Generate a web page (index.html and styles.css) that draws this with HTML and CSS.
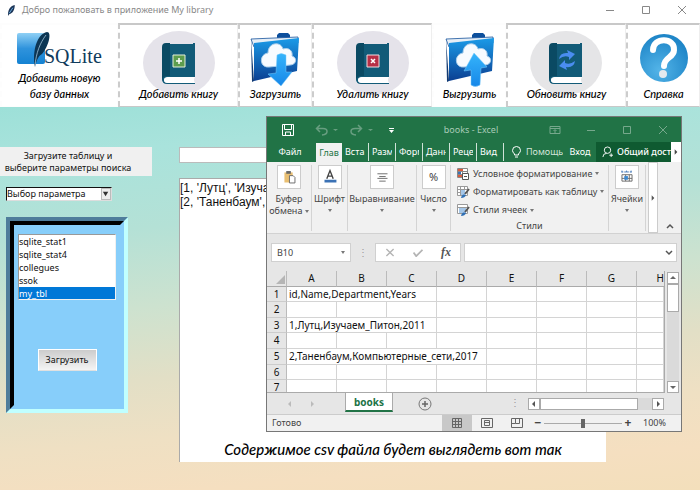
FILE: index.html
```html
<!DOCTYPE html>
<html lang="ru">
<head>
<meta charset="utf-8">
<title>My library</title>
<link rel="stylesheet" href="styles.css">
</head>
<body>
<svg class="defs" aria-hidden="true">
  <defs>
    <linearGradient id="blue" x1="0" y1="0" x2="0" y2="1"><stop offset="0" stop-color="#1b9be8"/><stop offset="1" stop-color="#0b3f92"/></linearGradient>
    <linearGradient id="sky" x1="0" y1="0" x2="0" y2="1"><stop offset="0" stop-color="#8fd0f5"/><stop offset=".5" stop-color="#2f93dc"/><stop offset="1" stop-color="#1482d2"/></linearGradient>
    <linearGradient id="arrow" x1="0" y1="0" x2="0" y2="1"><stop offset="0" stop-color="#35b4fb"/><stop offset="1" stop-color="#1787e8"/></linearGradient>
    <radialGradient id="ball" cx=".4" cy=".75" r=".7"><stop offset="0" stop-color="#53b4e8"/><stop offset="1" stop-color="#1f86c8"/></radialGradient>
    <symbol id="book" viewBox="0 0 74 68">
      <path d="M25 14h28v33H25z" fill="#125b78"/>
      <path d="M20 17q0-4 4-4h4v34q-6 0-8 4z" fill="#0a4a63"/>
      <path d="M20 17v32q0 5 5 5h28v-1H26q-4 0-4-3t4-3h27V13h-2v33H25q-3 0-5 3z" fill="#125b78"/>
      <path d="M53 47H26q-4 0-4 3t4 3h27q-2-3 0-6z" fill="#fff"/>
    </symbol>
    <symbol id="folder" viewBox="0 0 50 54">
      <path d="M27 6V2l2-2h9l2 2v4z" fill="#0d4f9c"/>
      <path d="M1 6l47-2v6L4 14z" fill="#e6eef6" stroke="#16539c" stroke-width=".8"/>
      <path d="M1 6l3 42-2 1z" fill="#123a72"/>
      <path d="M4 10L49 5l-2 33L4 48z" fill="url(#blue)"/>
      <path d="M19 34C9 35 9 21 18 20 18 9 31 8 33 16c6-2 10 2 9 7 6 2 4 9-2 9z" fill="#f7fbff" stroke="#a9cdea"/>
    </symbol>
  </defs>
</svg>

<header class="titlebar">
  <svg class="feather" viewBox="0 0 9 14"><path d="M1 13C0 7 3 2 8 1c0 5-2 9-6 10z" fill="#1c3557"/><path d="M2 10L6 4" stroke="#6eb4e8"/></svg>
  <h1>Добро пожаловать в приложение My library</h1>
  <div class="winbtns">
    <button aria-label="Свернуть"><svg viewBox="0 0 10 10"><path d="M1 5.500h8"/></svg></button>
    <button aria-label="Развернуть"><svg viewBox="0 0 10 10"><path d="M1.500 1.500h7v7h-7z"/></svg></button>
    <button aria-label="Закрыть"><svg viewBox="0 0 10 10"><path d="M1 1l8 8M9 1L1 9"/></svg></button>
  </div>
</header>

<nav class="tools">
  <button class="tool plain">
    <svg class="logo" viewBox="0 0 88 40">
      <rect x="1" y="2" width="28" height="31" rx="2" fill="url(#sky)"/>
      <path d="M19 36C16 20 21 3 31 1c5 0 2 14-5 22-3 2-5 4-7 13z" fill="#0c3553"/>
      <path d="M19 35c1-13 5-23 11-31" stroke="#b8d9ee" fill="none" stroke-width=".7"/>
      <text x="28" y="32">SQLite</text>
    </svg>
    <span>Добавить новую<br>базу данных</span>
  </button>
  <button class="tool">
    <svg class="pic" viewBox="0 0 74 68"><ellipse cx="37" cy="33" rx="36" ry="32" fill="#e5e3ea"/><use href="#book"/><path d="M31 25h12v12H31z" fill="#5d9d4e" stroke="#e6f0d8"/><path d="M37 28v6M34 31h6" stroke="#fff" stroke-width="1.500"/></svg>
    <span>Добавить книгу</span>
  </button>
  <button class="tool">
    <svg class="fold" viewBox="0 0 50 54"><use href="#folder"/><path d="M27 22q4-3 9 0v17h6L31 53 18 41l8-1z" fill="url(#arrow)" stroke="#7bcaf8" stroke-width=".5"/></svg>
    <span>Загрузить</span>
  </button>
  <button class="tool">
    <svg class="pic" viewBox="0 0 74 68"><ellipse cx="37" cy="33" rx="36" ry="32" fill="#e5e3ea"/><use href="#book"/><path d="M31 25h12v12H31z" fill="#b62f46" stroke="#f2dde0"/><path d="M35 29l4 4M39 29l-4 4" stroke="#fff" stroke-width="1.500"/></svg>
    <span>Удалить книгу</span>
  </button>
  <button class="tool plain">
    <svg class="fold" viewBox="0 0 50 54"><use href="#folder"/><path d="M29 20l13 14-6 1-1 17q-5 3-9 0V37l-7 1z" fill="url(#arrow)" stroke="#7bcaf8" stroke-width=".5"/></svg>
    <span>Выгрузить</span>
  </button>
  <button class="tool">
    <svg class="pic" viewBox="0 0 74 68"><ellipse cx="37" cy="33" rx="36" ry="32" fill="#e5e5e7"/><use href="#book"/><path d="M30 29q1-7 9-6l-1-3 8 4-6 6v-3q-5-2-10 2zM46 31q-1 7-9 6l1 3-8-4 6-6v3q5 2 10-2z" fill="#4a8df0"/></svg>
    <span>Обновить книгу</span>
  </button>
  <button class="tool">
    <svg class="help" viewBox="0 0 50 50"><circle cx="25" cy="25" r="24" fill="url(#ball)"/><path d="M14 17C14 4 36 4 35 17c0 8-10 7-10 16" fill="none" stroke="#fff" stroke-width="6" stroke-linecap="round"/><circle cx="24" cy="41" r="4" fill="#e4e9ee"/></svg>
    <span>Справка</span>
  </button>
</nav>

<main class="work">
  <aside class="side">
    <label class="hint" for="param">Загрузите таблицу и<br>выберите параметры поиска</label>
    <div class="combo">
      <select id="param"><option>Выбор параметра</option></select>
      <svg viewBox="0 0 9 11"><path d="M1 3h6L4 8z"/></svg>
    </div>
    <div class="frame"><div class="panel">
      <select class="tables" size="5" aria-label="Таблицы">
        <option>sqlite_stat1</option><option>sqlite_stat4</option><option>collegues</option><option>ssok</option><option selected>my_tbl</option>
      </select>
      <button class="load">Загрузить</button>
    </div></div>
  </aside>
  <section class="content">
    <input class="query" type="text" aria-label="Поиск">
    <div class="output">
      <p>[1, 'Лутц', 'Изуча<br>[2, 'Таненбаум',</p>
      <p class="caption">Содержимое csv файла будет выглядеть вот так</p>
    </div>
  </section>

  <section class="excel" aria-label="books - Excel">
    <header class="xl-title">
      <div class="qat">
        <button aria-label="Сохранить"><svg viewBox="0 0 12 12"><path d="M.5.500h11v11H.500z" fill="none" stroke="#fff"/><path d="M2.500 1v4.500h7V1M3.500 11.500V8h5v3.500" fill="none" stroke="#fff"/></svg></button>
        <button class="dim" aria-label="Отменить"><svg class="wide" viewBox="0 0 24 12"><path d="M5 1L1.500 4.500 5 8M2 4.500h6q4 0 4 3t-5 3.500" fill="none" stroke="#689e80" stroke-width="1.500"/><path d="M18 5h5l-2.500 2z" fill="#689e80"/></svg></button>
        <button class="dim" aria-label="Повторить"><svg class="wide" viewBox="0 0 24 12"><path d="M8 1l3.500 3.500L8 8M11 4.500H5q-4 0-4 3t5 3.500" fill="none" stroke="#689e80" stroke-width="1.500"/><path d="M18 5h5l-2.500 2z" fill="#689e80"/></svg></button>
        <button aria-label="Настройка панели"><svg viewBox="0 0 12 12"><path d="M4 4h5v1H4zM4 6h5L6.500 9z" fill="#fff"/></svg></button>
      </div>
      <span>books - Excel</span>
      <div class="xl-win">
        <button aria-label="Параметры ленты"><svg viewBox="0 0 12 10"><path d="M1 1.500h10v7H1zM1 3.500h10M6 8V5M4.500 6L6 4.500 7.500 6"/></svg></button>
        <button aria-label="Свернуть"><svg viewBox="0 0 12 10"><path d="M2 5.500h8"/></svg></button>
        <button aria-label="Развернуть"><svg viewBox="0 0 12 10"><path d="M2.500 1.500h7v7h-7z"/></svg></button>
        <button aria-label="Закрыть"><svg viewBox="0 0 12 10"><path d="M2 1l8 8M10 1L2 9"/></svg></button>
      </div>
    </header>
    <nav class="tabs">
      <button class="file">Файл</button>
      <button class="on">Глав</button>
      <button class="cut">Вста</button>
      <button class="cut">Разм</button>
      <button class="cut">Форм</button>
      <button class="cut">Данн</button>
      <button class="cut">Реце</button>
      <button class="cut">Вид</button>
      <button class="assist"><svg viewBox="0 0 10 12"><path d="M3 8Q1 6 1 4.500a4 4 0 0 1 8 0Q9 6 7 8v1H3zM3.500 11h3" fill="none" stroke="#fff"/></svg><i>Помощь</i></button>
      <button class="login">Вход</button>
      <button class="share"><svg viewBox="0 0 12 12"><circle cx="6" cy="4" r="3.500"/><path d="M1 11.500q0-4 4-4M8 9.500h4M10 7.500v4"/></svg><i>Общий дост</i></button>
      <button class="more" aria-label="Далее"><svg viewBox="0 0 6 6"><path d="M2 1v4l2-2z"/></svg></button>
    </nav>
    <div class="ribbon">
      <button class="grp clip"><svg class="box" viewBox="0 0 24 24"><path d="M7 7h9v11H7z" fill="#e9bf72"/><path d="M9 5.500h5v3H9z" fill="#666"/><path d="M12.500 10.500h4l2 2v6h-6z" fill="#fff" stroke="#666"/></svg><span>Буфер<br>обмена <b></b></span></button>
      <button class="grp font"><svg class="box" viewBox="0 0 24 24"><path d="M8.500 14L12 5l3.500 9M9.500 11h5" fill="none" stroke="#444" stroke-width="1.500"/><path d="M6 15h13v3H6z" fill="#3b72b5"/></svg>Шрифт<b></b></button>
      <button class="grp align"><svg class="box" viewBox="0 0 24 24"><path d="M7 8.500h11M9 11.500h7M7 13.500h11M9 16.500h7" stroke="#666"/></svg>Выравнивание<b></b></button>
      <button class="grp num"><span class="box">%</span>Число<b></b></button>
      <div class="styles">
        <button><svg viewBox="0 0 13 12"><path d="M.5.500h10v9H.500zM.5 3.500h10M.5 6.500h10M5.500.500v9" fill="#fff" stroke="#888"/><path d="M1 1h5v2H1zM1 7h4v2H1z" fill="#d95a3c"/><path d="M1 4h3v2H1z" fill="#3b72b5"/><path d="M5.500 5.500h6v6h-6z" fill="#fff" stroke="#555"/><path d="M7 8.500h3" stroke="#555"/></svg>Условное форматирование <b></b></button>
        <button><svg viewBox="0 0 13 12"><path d="M.5.500h10v9H.500zM.5 3.500h10M.5 6.500h10M3.500.500v9M7.500.500v9" fill="#fff" stroke="#999"/><path d="M4 4h4v5H4z" fill="#a4c6e8"/><path d="M12 3L8 8" stroke="#555" stroke-width="2"/><path d="M4 12q1-5 5-3-1 3-5 3z" fill="#2f6fb4"/></svg>Форматировать как таблицу <b></b></button>
        <button><svg viewBox="0 0 13 12"><path d="M.5.500h10v9H.500zM.5 3.500h10" fill="#fff" stroke="#999"/><path d="M2 4h7v5H2z" fill="#a4c6e8"/><path d="M12 3L8 8" stroke="#555" stroke-width="2"/><path d="M4 12q1-5 5-3-1 3-5 3z" fill="#2f6fb4"/></svg>Стили ячеек <b></b></button>
        <span>Стили</span>
      </div>
      <button class="grp cells"><svg class="box" viewBox="0 0 24 24"><path d="M6 6.500h11M6.500 5v3M11.500 5v3M16.500 5v3" stroke="#3b72b5" stroke-dasharray="2 1"/><path d="M6.500 9.500h11v7h-11zM6.500 13.500h11M10.500 9.500v7M14.500 9.500v7" fill="#fff" stroke="#666"/><path d="M9 11h4v4H9z" fill="#3b88d0"/></svg>Ячейки<b></b></button>
      <button class="scrollr" aria-label="Прокрутить"><svg viewBox="0 0 6 6"><path d="M2 1v4l2-2z"/></svg></button>
      <button class="fold-up" aria-label="Свернуть ленту"><svg viewBox="0 0 8 6"><path d="M1 5l3-3 3 3" fill="none" stroke="#555" stroke-width="1.500"/></svg></button>
    </div>
    <div class="fbar">
      <div class="namebox"><input type="text" value="B10" aria-label="Имя ячейки"><b></b></div>
      <span class="dots">⋮</span>
      <div class="fx">
        <button aria-label="Отмена"><svg viewBox="0 0 10 10"><path d="M1 1l8 8M9 1L1 9" stroke="#b4b4b4" stroke-width="1.500"/></svg></button>
        <button aria-label="Ввод"><svg viewBox="0 0 10 10"><path d="M0 5l3 4 7-7" fill="none" stroke="#b4b4b4" stroke-width="2"/></svg></button>
        <button class="fn">fx</button>
      </div>
      <div class="formula"><input type="text" aria-label="Строка формул"><svg viewBox="0 0 8 6"><path d="M1 1l3 3 3-3" fill="none" stroke="#555" stroke-width="1.500"/></svg></div>
    </div>
    <div class="sheet">
      <div class="gridwrap">
      <table>
        <colgroup><col class="rh"><col><col><col><col><col><col><col><col class="last"></colgroup>
        <thead><tr><th class="corner"><svg viewBox="0 0 9 9"><path d="M9 0v9H0z" fill="#b5b5b5"/></svg></th><th>A</th><th>B</th><th>C</th><th>D</th><th>E</th><th>F</th><th>G</th><th class="h">H</th></tr></thead>
        <tbody>
          <tr><th>1</th><td colspan="3">id,Name,Department,Years</td><td></td><td></td><td></td><td></td><td></td></tr>
          <tr class="t"><th>2</th><td></td><td></td><td></td><td></td><td></td><td></td><td></td><td></td></tr>
          <tr><th>3</th><td colspan="3">1,Лутц,Изучаем_Питон,2011</td><td></td><td></td><td></td><td></td><td></td></tr>
          <tr class="t"><th>4</th><td></td><td></td><td></td><td></td><td></td><td></td><td></td><td></td></tr>
          <tr class="t"><th>5</th><td colspan="4">2,Таненбаум,Компьютерные_сети,2017</td><td></td><td></td><td></td><td></td></tr>
          <tr><th>6</th><td></td><td></td><td></td><td></td><td></td><td></td><td></td><td></td></tr>
          <tr class="s"><th>7</th><td></td><td></td><td></td><td></td><td></td><td></td><td></td><td></td></tr>
        </tbody>
      </table>
      </div>
      <div class="vscroll"><button aria-label="Вверх"><svg viewBox="0 0 8 8"><path d="M1 5h6L4 2z"/></svg></button><i></i><button aria-label="Вниз"><svg viewBox="0 0 8 8"><path d="M1 3h6L4 6z"/></svg></button></div>
    </div>
    <div class="sheetbar">
      <button class="nav" aria-label="Назад"><svg viewBox="0 0 6 6"><path d="M4 0v6L1 3z"/></svg></button>
      <button class="nav" aria-label="Вперёд"><svg viewBox="0 0 6 6"><path d="M2 0v6l3-3z"/></svg></button>
      <button class="sheettab">books</button>
      <button class="add" aria-label="Новый лист"><svg viewBox="0 0 14 14"><circle cx="7" cy="7" r="6" fill="none" stroke="#777"/><path d="M7 4v6M4 7h6" stroke="#666" stroke-width="1.500"/></svg></button>
      <span class="dots">⋮</span>
      <div class="hscroll"><button aria-label="Влево"><svg viewBox="0 0 6 6"><path d="M4 0v6L1 3z"/></svg></button><i></i><button aria-label="Вправо"><svg viewBox="0 0 6 6"><path d="M2 0v6l3-3z"/></svg></button></div>
    </div>
    <footer class="status">
      <span>Готово</span>
      <button class="view cur" aria-label="Обычный"><svg viewBox="0 0 12 12"><path d="M1.500 1.500h9v9h-9zM1.500 4.500h9M1.500 7.500h9M4.500 1.500v9M7.500 1.500v9"/></svg></button>
      <button class="view" aria-label="Разметка страницы"><svg viewBox="0 0 12 12"><path d="M.5 1.500h11v9H.500zM3.500 3.500h5v5h-5zM4 5.500h4"/></svg></button>
      <button class="view" aria-label="Страничный"><svg viewBox="0 0 12 12"><path d="M.5 1.500h11v9H.500zM4.500 1.500v5h-4M8.500 1.500v5h-4"/></svg></button>
      <button class="zb" aria-label="Мельче">−</button>
      <input class="zoom" type="range" min="0" max="100" value="50" aria-label="Масштаб">
      <button class="zb" aria-label="Крупнее">+</button>
      <output>100%</output>
    </footer>
  </section>
</main>
</body>
</html>
```
FILE: styles.css
```css
* { box-sizing: border-box; }
body {
  margin: 0;
  min-height: 100vh;
  display: flex;
  flex-direction: column;
  font: 10px/12px "Noto Sans", "Open Sans", sans-serif;
  color: #111;
  background: #fff;
}
button, input, select { font: inherit; color: inherit; margin: 0; padding: 0; border: 0; background: none; border-radius: 0; outline: 0; }
button { display: flex; align-items: center; justify-content: center; white-space: nowrap; }
i { font-style: normal; }
.defs { position: absolute; width: 0; height: 0; }

.titlebar { display: flex; align-items: center; height: 23px; padding: 0 8px 3px 7px; gap: 6px; }
.feather { width: 9px; height: 13px; }
.titlebar h1 { margin: 0; flex: 1; font: 9px/12px "Noto Sans", sans-serif; color: #888; }
.winbtns { display: flex; gap: 16px; }
.winbtns button { width: 20px; height: 16px; }
.winbtns svg { width: 10px; height: 10px; fill: none; stroke: #888; }

.tools { display: grid; grid-template-columns: 118fr 120fr 74fr 120fr 74fr 120fr 74fr; height: 84px; }
.tool {
  display: grid;
  justify-items: center;
  padding: 4px 0 4px;
  background: #fff;
  border: 1px solid #c8c8c8;
  border-top-width: 2px;
  border-left: 2px dashed #ccc;
  border-right-color: #eee;
  font: italic 500 11px/16px Lato, "Noto Sans", sans-serif;
  color: #000;
}
.tool.plain { border-color: #fdfdfd; }
.tool > * { grid-area: 1 / 1; }
.tool svg { align-self: start; }
.tool span { align-self: end; }
.logo { width: 88px; height: 40px; margin-top: 2px; }
.logo text { font: 20px "Liberation Serif", serif; fill: #0f3b5c; }
.pic { width: 74px; height: 68px; margin-top: 1px; }
.fold { width: 50px; height: 54px; margin-top: 4px; }
.help { width: 50px; height: 50px; margin-top: 4px; }

.work {
  position: relative;
  flex: 1;
  display: grid;
  grid-template-columns: 152px 1fr;
  gap: 27px;
  padding: 40px 94px 28px 0;
  background: linear-gradient(175deg, #9de0d8 0%, #a9e3dc 12%, #b4e1d6 30%, #cde2cf 48%, #e2dfc6 64%, #efe0c3 78%, #f5dfc0 90%, #f3dfbb 100%);
}
.side { display: flex; flex-direction: column; align-items: flex-start; }
.hint { align-self: stretch; height: 29px; padding: 3px 16px 0 0; text-align: center; background: #f0f0f0; font-size: 9px; white-space: nowrap; }
.combo { display: flex; width: 106px; height: 14px; margin: 11px 0 16px 6px; background: #fff; border: 1px solid #ddd; border-top-color: #111; border-left-color: #111; }
.combo select { flex: 1; appearance: none; font-size: 9px; line-height: 12px; }
.combo svg { width: 10px; height: 12px; background: #eee; border: 1px solid #bbb; fill: #333; }
.frame { margin-left: 6px; border: 4px solid; border-color: #4f7d9b #c0ffff #c0ffff #4f7d9b; }
.panel { width: 114px; height: 188px; border: 4px solid; border-color: #000 #87cefa #87cefa #000; background: #87cefa; display: flex; flex-direction: column; align-items: center; padding-top: 9px; }
.tables { width: 98px; height: 66px; border: 1px solid #f0f0f0; border-top-color: #999; border-left-color: #999; background: #fff; overflow: hidden; font-size: 9px; scrollbar-width: none; }
.tables option { height: 13px; min-height: 13px; padding: 0; line-height: 12px; color: #111; }
.tables option:checked { background: #0078d7 linear-gradient(#0078d7, #0078d7); color: #fff; -webkit-text-fill-color: #fff; }
.load { width: 59px; height: 22px; margin-top: 49px; border: 1px solid #fff; border-bottom-color: #e0e0e0; background: linear-gradient(#ccc, #f4f4f4); font-size: 9px; }

.content { display: flex; flex-direction: column; gap: 15px; min-width: 0; }
.query { width: 100%; height: 16px; background: #fff; border: 1px solid #bbb; }
.output { flex: 1; display: flex; flex-direction: column; justify-content: space-between; background: #fff; border-left: 1px solid #aaa; border-top: 1px solid #aaa; font: 12px/14px "Liberation Sans", sans-serif; overflow: hidden; }
.output p { margin: 2px 0 0; white-space: nowrap; }
.output .caption { margin: 0 0 3px; text-align: center; font: italic 500 15px/20px Lato, "Noto Sans", sans-serif; color: #000; }

.excel { position: absolute; left: 266px; right: 18px; top: 9px; display: flex; flex-direction: column; border: 1px solid #777; background: #e6e6e6; color: #444; }
.excel b { display: inline-block; width: 0; height: 0; border: 2px solid transparent; border-top: 3px solid #777; border-bottom: 0; vertical-align: middle; }
.xl-title { display: flex; align-items: center; justify-content: space-between; height: 25px; background: #217346; color: #a8cbb7; font-size: 9px; padding: 0 8px 0 15px; }
.qat { display: flex; gap: 11px; }
.qat svg { width: 12px; height: 12px; display: block; }
.qat button:first-child { margin-right: 10px; }
.qat .wide { width: 24px; }
.xl-win { display: flex; gap: 16px; }
.xl-win button { width: 20px; height: 16px; }
.xl-win svg { width: 12px; height: 10px; fill: none; stroke: #76a88c; }
.tabs { display: flex; height: 20px; background: #217346; color: #fff; font-size: 9px; }
.tabs button { overflow: hidden; }
.tabs .file { width: 49px; padding-right: 3px; }
.tabs .on { width: 26px; background: #f1f1f1; color: #217346; margin-top: 1px; }
.tabs .cut { width: 27px; padding-left: 3px; justify-content: flex-start; position: relative; }
.tabs .cut::after { content: ""; position: absolute; right: 0; top: 1px; bottom: 1px; width: 3px; background: #217346; border-right: 1px solid #cfe2d7; }
.tabs svg { flex: none; width: 11px; height: 12px; margin-right: 4px; }
.tabs .assist { width: 60px; padding-left: 7px; justify-content: flex-start; }
.tabs .assist i { overflow: hidden; color: #d3e4d9; }
.tabs .login { flex: 1; }
.tabs .share { width: 75px; padding-left: 6px; justify-content: flex-start; background: #0f5a31; }
.share svg { fill: none; stroke: #fff; }
.share i { font-weight: 500; }
.tabs .more { width: 10px; background: #fff; }
.tabs .more svg { width: 8px; height: 8px; margin: 0; fill: #444; }

.ribbon { display: flex; height: 72px; padding-top: 3px; background: #f1f1f1; border-bottom: 1px solid #d2d2d2; font-size: 9px; line-height: 12px; }
.ribbon .grp { display: flex; flex-direction: column; justify-content: flex-start; flex: none; height: 66px; border-right: 1px solid #d4d4d4; text-align: center; }
.ribbon .box { display: block; flex: none; width: 24px; height: 24px; margin: 0 auto 4px; border: 1px solid #ccc; background: #fff; font-size: 11px; line-height: 22px; }
.ribbon .grp > b { margin: 4px auto 0; }
.ribbon .clip { width: 45px; }
.ribbon .font { width: 36px; }
.ribbon .align { width: 69px; }
.ribbon .num { width: 34px; }
.ribbon .styles { flex: 1; height: 66px; display: flex; flex-direction: column; justify-content: space-between; align-items: flex-start; padding-left: 6px; border-right: 1px solid #d4d4d4; }
.styles button { height: 17px; gap: 3px; }
.styles svg { width: 13px; height: 12px; }
.styles span { align-self: center; padding-right: 6px; line-height: 11px; }
.ribbon .cells { width: 37px; }
.scrollr { flex: none; width: 10px; margin: -3px 0 0 2px; background: #fff; border: 1px solid #ccc; }
.scrollr svg { width: 8px; height: 8px; fill: #555; flex: none; }
.fold-up { width: 23px; align-items: flex-end; padding-bottom: 4px; }
.fold-up svg { width: 8px; height: 6px; }

.fbar { display: flex; height: 37px; padding: 9px 4px; }
.namebox { display: flex; align-items: center; width: 80px; background: #fff; border: 1px solid #d0d0d0; padding: 0 5px; }
.namebox input { flex: 1; min-width: 0; font-size: 9px; }
.dots { width: 24px; text-align: center; line-height: 18px; color: #999; }
.fx { display: flex; width: 86px; background: #fff; border: 1px solid #d0d0d0; }
.fx button { flex: 1; }
.fx svg { width: 10px; height: 9px; }
.fx .fn { font: italic bold 12px "Liberation Serif", serif; color: #555; }
.formula { display: flex; flex: 1; align-items: center; margin-left: 3px; padding-right: 3px; background: #fff; border: 1px solid #d0d0d0; }
.formula input { flex: 1; min-width: 0; }
.formula svg { width: 8px; height: 6px; }

.sheet { display: flex; }
.gridwrap { flex: 1; min-width: 0; height: 122px; overflow: hidden; border-right: 1px solid #aaa; border-bottom: 1px solid #aaa; }
.sheet table { width: 100%; table-layout: fixed; border-collapse: separate; border-spacing: 0; line-height: 13px; color: #111; }
.sheet col { width: 50px; }
.sheet .rh { width: 20px; }
.sheet .last { width: auto; }
.sheet th { height: 15px; padding: 0; font-weight: normal; background: #e6e6e6; border-right: 1px solid #bbb; border-bottom: 1px solid #ccc; }
.sheet thead th { height: 16px; border-bottom: 1px solid #aaa; }
.sheet thead .h { text-align: right; border-right: 0; overflow: hidden; }
.corner svg { display: block; width: 9px; height: 9px; margin: 2px 1px 0 auto; }
.sheet td { padding: 0 0 0 2px; background: #fff; border-right: 1px solid #d4d4d4; border-bottom: 1px solid #d4d4d4; white-space: nowrap; }
.sheet .t th { height: 16px; }
.vscroll { display: flex; flex-direction: column; width: 12px; margin: 1px 2px 0; background: #dadada; }
.vscroll button, .vscroll i { height: 12px; border: 1px solid #aaa; background: #fff; }
.vscroll i { height: 28px; margin-bottom: auto; }
.vscroll svg { width: 8px; height: 8px; flex: none; fill: #666; }

.sheetbar { display: flex; height: 21px; padding-left: 12px; }
.nav { width: 22px; }
.nav svg { width: 6px; height: 6px; fill: #bbb; }
.sheettab { width: 48px; height: 19px; margin-left: 22px; background: #fff; border: 1px solid #aaa; border-top: 0; border-bottom: 2px solid #217346; font-size: 10px; font-weight: bold; color: #217346; }
.add { width: 64px; }
.add svg { width: 14px; height: 14px; }
.sheetbar .dots { margin-left: auto; }
.hscroll { display: flex; width: 136px; height: 12px; margin: 5px 17px 0 1px; background: #dadada; }
.hscroll button { width: 12px; border: 1px solid #aaa; background: #fff; }
.hscroll i { width: 98px; margin-right: auto; border: 1px solid #aaa; background: #fff; }
.hscroll svg { width: 6px; height: 6px; flex: none; fill: #555; }

.status { display: flex; align-items: center; height: 17px; padding-right: 15px; background: #f1f1f1; border-top: 1px solid #ccc; font-size: 9px; }
.status span { flex: 1; padding-left: 5px; }
.view { width: 30px; height: 16px; }
.cur { background: #c8c8c8; }
.view svg { width: 12px; height: 12px; fill: none; stroke: #666; }
.zb { width: 12px; font-size: 12px; font-weight: bold; }
.zoom { appearance: none; width: 78px; height: 12px; background: linear-gradient(#aaa, #aaa) center / 100% 1px no-repeat; }
.zoom::-webkit-slider-thumb { appearance: none; width: 4px; height: 9px; background: #666; }
.status output { width: 32px; text-align: right; }
```
